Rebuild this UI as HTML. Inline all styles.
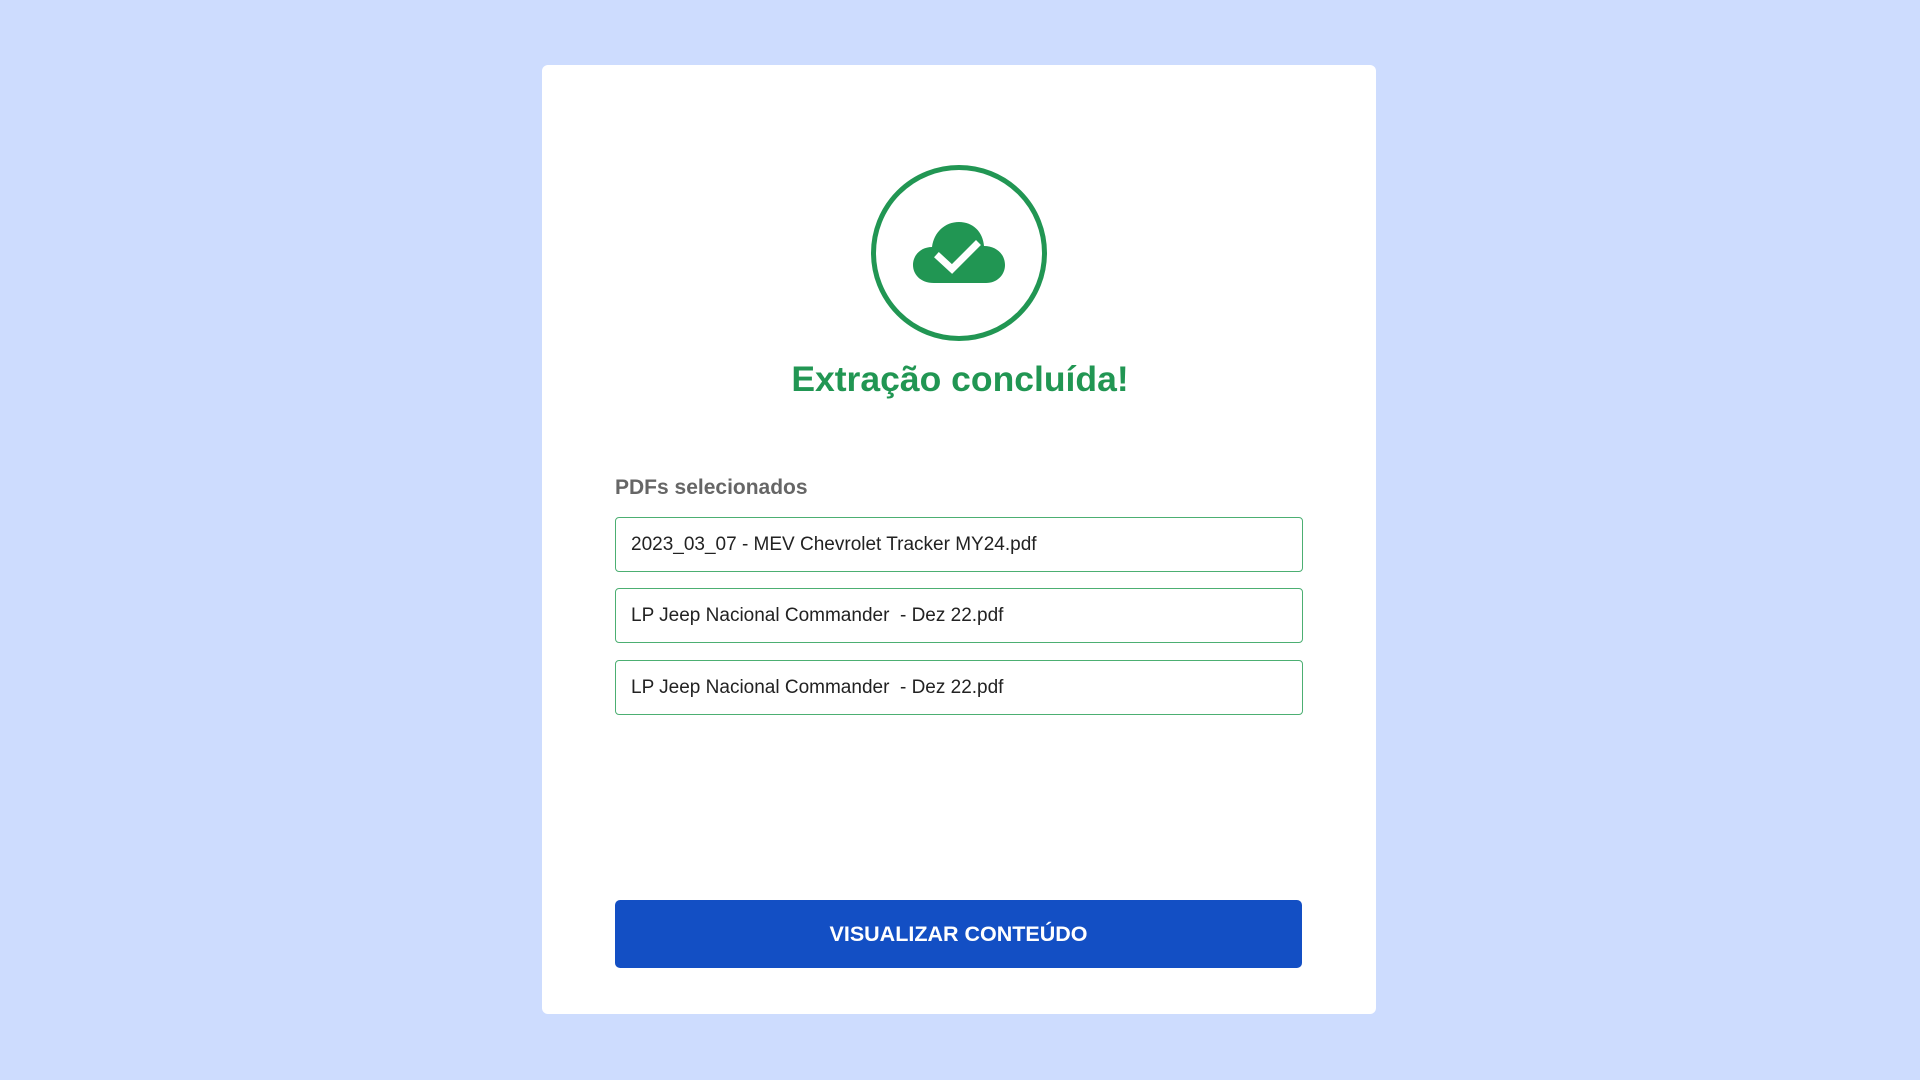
<!DOCTYPE html>
<html><head><meta charset="utf-8"><style>
body{margin:0;width:1920px;height:1080px;background:#cddcfe;font-family:"Liberation Sans",sans-serif;position:relative;overflow:hidden}
.card{position:absolute;left:542px;top:65px;width:834px;height:949px;background:#fff;border-radius:6px}
.circle{position:absolute;left:871px;top:165px;width:166px;height:166px;border:5px solid #219653;border-radius:50%}
h1{position:absolute;left:0;width:1920px;top:359px;margin:0;text-align:center;font-size:35.5px;font-weight:bold;color:#219653}
.lbl{position:absolute;left:615px;top:476px;font-size:21px;font-weight:bold;color:#666}
.f{position:absolute;left:615px;height:53px;border:1px solid #4caf72;border-radius:4px;font-size:19px;color:#222;line-height:53px;box-sizing:content-box;padding-left:15px;width:671px}
.btn{position:absolute;left:615px;top:900px;width:687px;height:68px;background:#134fc4;border-radius:5px;color:#fff;font-weight:bold;font-size:21.5px;text-align:center;line-height:68px}
</style></head><body>
<div class="card"></div>
<div class="circle"></div>
<svg style="position:absolute;left:912px;top:220px" width="94" height="66" viewBox="0 0 94 66">
<path d="M22 63 C8 63 1 54 1 45 C1 35 9 27 20 27 C22 12 33 2 47 2 C61 2 71 12 72 26 C84 26 93 34 93 45 C93 55 85 63 74 63 Z" fill="#219653"/>
<path d="M27 37 L40 49 L64 25" fill="none" stroke="#fff" stroke-width="7" stroke-linecap="square"/>
</svg>
<h1>Extração concluída!</h1>
<div class="lbl">PDFs selecionados</div>
<div class="f" style="top:517px">2023_03_07 - MEV Chevrolet Tracker MY24.pdf</div>
<div class="f" style="top:588px">LP Jeep Nacional Commander&nbsp; - Dez 22.pdf</div>
<div class="f" style="top:660px">LP Jeep Nacional Commander&nbsp; - Dez 22.pdf</div>
<div class="btn">VISUALIZAR CONTEÚDO</div>
</body></html>
